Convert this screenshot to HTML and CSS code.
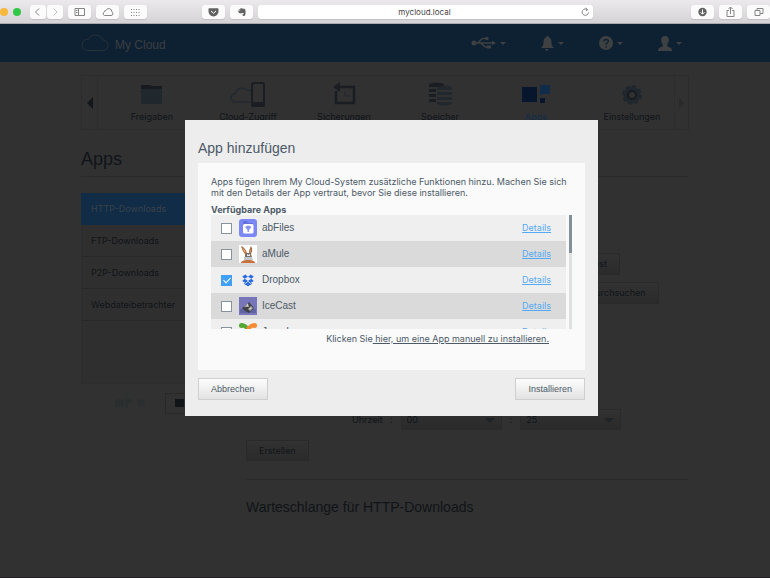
FILE: index.html
```html
<!DOCTYPE html>
<html lang="de">
<head>
<meta charset="utf-8">
<title>My Cloud</title>
<link rel="stylesheet" href="styles.css">
</head>
<body>
<div class="browser">
  <div class="lights"><span class="light amber"></span><span class="light green"></span></div>
  <div class="pair">
    <button class="tool" aria-label="Zurück"><svg width="16" height="14" viewBox="0 0 16 14"><path d="M9 3.500 5.500 7 9 10.500"/></svg></button>
    <button class="tool faint" aria-label="Vorwärts"><svg width="16" height="14" viewBox="0 0 16 14"><path d="M6.500 3.500 10 7 6.500 10.500"/></svg></button>
  </div>
  <button class="tool" aria-label="Seitenleiste"><svg width="23" height="14" viewBox="0 0 23 14"><path d="M7 3.500h9.500v7H7zM10.500 3.500v7M8 5.500h1.500M8 7.500h1.500"/></svg></button>
  <button class="tool" aria-label="iCloud"><svg width="23" height="14" viewBox="0 0 23 14"><path d="M8.500 10.500h6.500a2 2 0 0 0 .8-3.800 3 3 0 0 0-5.800-1.200 1.700 1.700 0 0 0-1.800 1.600 1.800 1.800 0 0 0 .3 3.400z"/></svg></button>
  <button class="tool" aria-label="Top Sites"><svg width="23" height="14" viewBox="0 0 23 14"><path stroke-dasharray="1 1.500" d="M7 4.500h9.500M7 7.500h9.500M7 10.500h9.500"/></svg></button>
  <button class="tool pocket" aria-label="Pocket"><svg width="23" height="14" viewBox="0 0 23 14"><path class="fill" d="M7.300 3.200h8.400q.8 0 .8.800v2.600a5 4.800 0 0 1-10 0V4q0-.8.800-.8z"/><path class="light-line" d="m9 6 2.500 2.300L14 6"/></svg></button>
  <button class="tool" aria-label="Evernote"><svg width="23" height="14" viewBox="0 0 23 14"><path class="fill" d="M8.300 5.600h1.900V3.400c1-.5 2.500-.2 3 .4 1.300 0 2 .3 2.200 1.200.3 2 .2 4.500-.4 5.600-.8.900-2.600.4-2.500-.8.100-.7.700-.8 1.300-.7V8.200c-.6.200-1.300 0-1.600-.5-.5.700-1.700.9-2.600.6-1-.3-1.400-1.300-1.300-2.700zM8.500 5l1.200-1.200V5z"/></svg></button>
  <div class="address"><span>mycloud.local</span><svg width="9" height="10" viewBox="0 0 9 10"><path d="M7.500 5.500a3.200 3.200 0 1 1-1-2.700L5 3.900M4.500 1l2.200 1.700"/></svg></div>
  <button class="tool" aria-label="Downloads"><svg width="23" height="14" viewBox="0 0 23 14"><circle class="fill" cx="11.500" cy="7" r="4.200"/><path class="light-line" d="M11.500 4.500V9M9.500 7.200l2 2 2-2"/></svg></button>
  <button class="tool" aria-label="Teilen"><svg width="23" height="14" viewBox="0 0 23 14"><path d="M10 5.500H8v6h7v-6h-2M11.500 9V2M9.500 4l2-2 2 2"/></svg></button>
  <button class="tool" aria-label="Tabs"><svg width="23" height="14" viewBox="0 0 23 14"><path d="M8 5.500h5v5H8zM10 5.500v-2h6v5h-3"/></svg></button>
</div>

<div class="page">
<header class="masthead">
  <div class="wrap masthead-row">
    <a class="logo" href="#"><svg width="28" height="18" viewBox="0 0 28 18"><path d="M6.500 16.500h15c3.500 0 5.500-2.500 5.500-5.200 0-3-2.200-5-5-5.300C20 2.500 17.500 1 14 1 11 1 8.500 2.700 7.800 5.200 4 5 1 7.500 1 11c0 3 2.300 5.500 5.500 5.500z"/></svg><span>My Cloud</span></a>
    <nav class="status">
      <button aria-label="USB"><svg width="25" height="14" viewBox="0 0 25 14"><circle cx="3" cy="7" r="2.500"/><path class="line" d="M3 7h20M6 7c3 0 3-4.500 6-4.500h3M9 7c3 0 3 4 6 4h2"/><path d="M21 4.800 25 7l-4 2.200zM16 9.500h4v3h-4z"/><circle cx="16" cy="2.500" r="1.700"/></svg><i class="caret"></i></button>
      <button aria-label="Meldungen"><svg width="13" height="15" viewBox="0 0 13 15"><path d="M6.500 0c.9 0 1.200.5 1.200 1.200C10 2 10.500 4 10.500 6.500c0 2.500.7 3.800 2.500 5.500H0c1.800-1.700 2.500-3 2.500-5.500C2.500 4 3 2 5.300 1.200 5.300.5 5.600 0 6.500 0zM4 13h3.500c-.5 2.400-3 2.400-3.500 0z"/></svg><i class="caret"></i></button>
      <button aria-label="Hilfe"><svg width="14" height="14" viewBox="0 0 14 14"><circle cx="7" cy="7" r="7"/><path class="mark" d="M4.700 5.300c.2-2.600 4.800-2.500 4.600 0C9.200 7 7 6.800 7 8.700M7 10v1.500"/></svg><i class="caret"></i></button>
      <button aria-label="Benutzer"><svg width="14" height="15" viewBox="0 0 14 15"><path d="M7 0c2.800 0 4 2 3.800 4.300C10.600 6.800 9.500 8 9 9c0 1.600 1 1.800 3 2.500 1.400.5 2 1.500 2 3.500H0c0-2 .6-3 2-3.500 2-.7 3-.9 3-2.500-.5-1-1.600-2.200-1.800-4.700C3 2 4.200 0 7 0z"/></svg><i class="caret"></i></button>
    </nav>
  </div>
</header>

<main class="wrap">
  <nav class="ribbon">
    <button class="step" aria-label="Vorherige"><svg width="6" height="12" viewBox="0 0 6 12"><path d="M6 0v12L0 6z"/></svg></button>
    <div class="tabs">
      <a href="#"><svg width="24" height="26" viewBox="0 0 24 26"><path fill="#171b1f" d="M1 4h9l2 1h10v4H1z"/><path fill="#20272d" d="M1 8h21v15H1z"/></svg><span>Freigaben</span></a>
      <a href="#"><svg width="36" height="26" viewBox="0 0 36 26"><path fill="none" stroke="#202931" stroke-width="1.500" d="M20 21H6c-6 0-7-8-.5-8.500C7 6 15 6 18 9.500h3"/><rect x="22" y="2" width="12" height="23" rx="2" fill="none" stroke="#1a1e22" stroke-width="2"/><path fill="#1a1e22" d="M21 21h14v3q0 2-2 2H23q-2 0-2-2z"/></svg><span>Cloud-Zugriff</span></a>
      <a href="#"><svg width="24" height="26" viewBox="0 0 24 26"><path fill="none" stroke="#1a1e22" stroke-width="2.500" d="M8 6h14v16H4V10"/><path fill="#1a1e22" d="M8 1v10L1 6z"/><path fill="none" stroke="#202931" d="M13 10v5h5"/></svg><span>Sicherungen</span></a>
      <a href="#"><svg width="26" height="26" viewBox="0 0 26 26"><path fill="#1a1e22" d="M2 3q7-3 15 0v3H2zM2 8h7v3H2zM2 13h7v3H2zM2 18h7v3H2z"/><path fill="#20272d" d="M10 6q8-3 15 0v3H10zM10 11h15v3H10zM10 16h15v3H10zM10 21h15v2q-8 3-15 0z"/></svg><span>Speicher</span></a>
      <a href="#" class="current"><svg width="28" height="26" viewBox="0 0 28 26"><path fill="#07162c" d="M0 6h15v15H0zM18 17h5v5h-5z"/><path fill="#102c4b" d="M18 4h10v9h-8l-2 2z"/></svg><span>Apps</span></a>
      <a href="#"><svg width="22" height="26" viewBox="0 0 22 26"><circle cx="11" cy="14" r="8.500" fill="none" stroke="#20272d" stroke-width="3" stroke-dasharray="4 2.670"/><circle cx="11" cy="14" r="6" fill="none" stroke="#20272d" stroke-width="5"/><circle cx="11" cy="14" r="4" fill="none" stroke="#171b1f" stroke-width="2"/></svg><span>Einstellungen</span></a>
    </div>
    <button class="step next" aria-label="Nächste"><svg width="5" height="10" viewBox="0 0 6 12"><path d="M0 0v12l6-6z"/></svg></button>
  </nav>

  <h1>Apps</h1>

  <div class="columns">
    <aside>
      <nav class="side">
        <a href="#" class="current">HTTP-Downloads</a>
        <a href="#">FTP-Downloads</a>
        <a href="#">P2P-Downloads</a>
        <a href="#">Webdateibetrachter</a>
      </nav>
      <div class="side-tools">
        <button class="muted" aria-label="App hinzufügen"><svg width="32" height="12" viewBox="0 0 32 12"><path d="M0 2h9v8H0zM10 1h7v5h-4v5h-3z"/><circle cx="26" cy="6" r="4"/></svg></button>
        <button aria-label="App entfernen"><svg width="32" height="12" viewBox="0 0 32 12"><path d="M0 2h9v8H0z"/><circle cx="26" cy="6" r="4"/></svg></button>
      </div>
    </aside>
    <form class="content">
      <div class="field"><input type="text" aria-label="URL"><button type="button" class="btn">Test</button></div>
      <div class="field second"><input type="text" aria-label="Speichern in"><button type="button" class="btn">Durchsuchen</button></div>
      <div class="time">
        <label for="hour">Uhrzeit</label><span>:</span>
        <span class="select"><select id="hour"><option>00</option></select></span><span>:</span>
        <span class="select"><select aria-label="Minute"><option>25</option></select></span>
      </div>
      <button type="button" class="btn create">Erstellen</button>
      <h2>Warteschlange für HTTP-Downloads</h2>
    </form>
  </div>
</main>
</div>

<div class="overlay">
  <section class="dialog" role="dialog" aria-labelledby="dialog-title">
    <h2 id="dialog-title">App hinzufügen</h2>
    <div class="panel">
      <p>Apps fügen Ihrem My Cloud-System zusätzliche Funktionen hinzu. Machen Sie sich<br>mit den Details der App vertraut, bevor Sie diese installieren.</p>
      <h3>Verfügbare Apps</h3>
      <div class="scroller">
        <ul>
          <li><input type="checkbox" id="abfiles"><svg width="18" height="18" viewBox="0 0 18 18"><rect width="18" height="18" rx="3" fill="#7c87f6"/><path fill="#6570df" d="M4 2h4l1 2h5v2H4z"/><rect x="4" y="5" width="10.500" height="9.500" rx="1.500" fill="#fff"/><path fill="#8993f5" d="M6 8q3-3 6.500 0L10 11v2H8.500v-2z"/></svg><label for="abfiles">abFiles</label><a href="#">Details</a></li>
          <li><input type="checkbox" id="amule"><svg width="18" height="18" viewBox="0 0 18 18"><path fill="#fff" d="M0 0h18v18H0z"/><path fill="#a9683e" d="M2 1c3 1 5 4 6 7h2c0-3 1-5 2-7 2 3 1 6 0 8l1 3H6V9C4 7 3 4 2 1z"/><path fill="#eab27e" d="M3.500 3c2 1 3 3 3.500 5L5 6.500zM12 3v4l-1 2z"/><path fill="#77726f" d="M7 8h5v4l-1 2H7l-1-2z"/><path fill="#eee" d="m8 9 1.500 1L11 9v2H8z"/><path fill="#c9703f" d="M2 17c4-3 10-3 14 0v1H2z"/><path fill="#c3c8cb" d="M5 12h8l1 3H5z"/></svg><label for="amule">aMule</label><a href="#">Details</a></li>
          <li><input type="checkbox" id="dropbox" checked><svg width="18" height="18" viewBox="0 0 18 18"><path fill="#2b6de3" d="M6.300 3.500 9 5.700 5.700 7.800 3.200 5.600zM11.700 3.500 9 5.700l3.300 2.100 2.500-2.200zM3.200 9.900l2.500-2.100L9 9.900 6.300 12zM14.800 9.900l-2.500-2.100L9 9.900l2.700 2.100zM9 10.800l2.700 2 1.300-.7v1L9 15.300l-4-2.200v-1l1.300.7z"/></svg><label for="dropbox">Dropbox</label><a href="#">Details</a></li>
          <li><input type="checkbox" id="icecast"><svg width="18" height="18" viewBox="0 0 18 18"><path fill="#7776bb" d="M0 0h18v18H0z"/><path fill="#6263a4" d="M1 12h16v4H1z"/><path fill="#41424e" d="M3 11l4-3 3-3 5 6-3 3-2 2-4-2z"/><path fill="#aaa9a0" d="m5 10 4-4 1 4zM9 12l3-3 2 2-3 3z"/><path fill="#eee" d="m8 8 1-1v2zM10 12l2-1v1z"/></svg><label for="icecast">IceCast</label><a href="#">Details</a></li>
          <li><input type="checkbox" id="joomla"><svg width="18" height="18" viewBox="0 0 18 18"><path fill="none" stroke="#52a833" stroke-width="4" d="M2.500 2.500c3-1 4 1 7 4"/><circle cx="2.500" cy="2.500" r="2.500" fill="#52a833"/><path fill="none" stroke="#f38b38" stroke-width="4" d="M15.500 2.500c-3-1-4 1-7 4"/><circle cx="15.500" cy="2.500" r="2.500" fill="#f38b38"/></svg><label for="joomla">Joomla</label><a href="#">Details</a></li>
        </ul>
        <div class="track"><div class="thumb"></div></div>
      </div>
      <p class="manual">Klicken Sie<a href="#">&nbsp;hier, um eine App manuell zu installieren.</a></p>
    </div>
    <div class="actions">
      <button class="btn bright">Abbrechen</button>
      <button class="btn bright">Installieren</button>
    </div>
  </section>
</div>
</body>
</html>
```
FILE: styles.css
```css
* { box-sizing: border-box; }
body {
  margin: 0;
  min-height: 100vh;
  display: flex;
  flex-direction: column;
  background: #313131;
  color: #101418;
  font: 9px/12px Inter, "Liberation Sans", sans-serif;
}
h1, h2, h3, p, ul { margin: 0; padding: 0; }
h1, h2 { font-family: "Liberation Sans", sans-serif; font-weight: 400; }
button, input, select { font: inherit; color: inherit; margin: 0; }
button { padding: 0; border: 0; background: none; }
a { color: inherit; text-decoration: none; }
svg { display: block; flex: none; }

/* Browser toolbar */
.browser {
  display: flex;
  align-items: center;
  height: 24px;
  gap: 5px;
  background: linear-gradient(#ebe9eb, #d5d3d5);
  border-bottom: 1px solid #aaa9ac;
  color: #555;
  overflow: hidden;
}
.lights { display: flex; gap: 5px; width: 25px; }
.light { width: 8px; height: 8px; border-radius: 50%; }
.amber { background: #f6b93b; }
.green { background: #33c748; }
.pair { display: flex; gap: 1px; }
.tool {
  flex: none;
  height: 14px;
  border-radius: 3px;
  background: #fbfbfb;
  box-shadow: 0 1px 1px #c0bfc1;
}
.tool path, .address path { fill: none; stroke: #858585; }
.tool .fill { fill: #626262; stroke: none; }
.tool .light-line { stroke: #fff; }
.faint path { stroke: #c2c2c2; }
.pocket { margin-left: 50px; }
.address {
  flex: 1;
  display: flex;
  align-items: center;
  height: 14px;
  margin-right: 93px;
  padding-right: 3px;
  border-radius: 3px;
  background: #fff;
  box-shadow: 0 1px 1px #c0bfc1;
  color: #444;
}
.address span { flex: 1; padding-left: 10px; text-align: center; font: 8px/14px Inter, "Liberation Sans", sans-serif; }

/* Page */
.page { flex: 1; border-bottom: 1px solid #231f22; }
.wrap { max-width: 608px; margin: 0 auto; }
.masthead { background: #0e2133; color: #3c3e41; }
.masthead-row { display: flex; justify-content: space-between; align-items: center; height: 38px; padding-right: 7px; }
.logo { display: flex; align-items: center; gap: 6px; font: 12px/16px "Liberation Sans", sans-serif; }
.logo span { padding-top: 4px; }
.logo path { fill: none; stroke: #28323b; }
.status { display: flex; gap: 35px; }
.status button { display: flex; align-items: center; gap: 4px; }
.status svg { fill: #3e4042; }
.status .line { fill: none; stroke: #3e4042; stroke-width: 1.500; }
.status .mark { fill: none; stroke: #0e2133; stroke-width: 1.500; }
.caret { border: 3px solid transparent; border-top-color: #3e4042; border-bottom: 0; }

.ribbon {
  display: grid;
  grid-template-columns: 16px 1fr 14px;
  height: 55px;
  margin-top: 13px;
  border: 1px solid #2c2c2d;
}
.step { display: flex; align-items: center; justify-content: center; border-right: 1px solid #2d2d2e; fill: #14171a; }
.step.next { border-right: 0; border-left: 1px solid #2d2d2e; fill: #27292b; }
.tabs { display: grid; grid-template-columns: repeat(6, 1fr); padding-left: 6px; margin-right: -6px; }
.tabs a { display: flex; flex-direction: column; align-items: center; gap: 4px; padding-top: 5px; }
.tabs .current { color: #102c4b; }

h1 { margin-top: 17px; padding-bottom: 5px; border-bottom: 1px solid #292929; font-size: 18px; line-height: 24px; }
.columns { display: grid; grid-template-columns: 148px 1fr; gap: 17px; margin-top: 16px; }
.side { min-height: 191px; border: 1px solid #2d2d2d; background: #2f2f2f; }
.side a { display: block; padding: 10px 0 9px 9px; border-bottom: 1px solid #282828; }
.side .current { margin: -1px -1px 0; padding: 10px 0 9px 10px; background: #102c47; border-color: #102c47; color: #3a4249; }
.side-tools { display: flex; gap: 8px; margin: 9px 0 0 24px; }
.side-tools button { padding: 3px 9px 4px; border: 1px solid #282828; fill: #121518; }
.side-tools .muted { border-color: #2f3030; fill: #2b2e2f; }

.btn {
  height: 22px;
  padding: 0 12px;
  border: 1px solid #292929;
  background: linear-gradient(#323232, #2b2b2b);
  white-space: nowrap;
}
.content { padding-top: 60px; }
.field { display: flex; gap: 8px; padding-left: 154px; }
.field input { width: 168px; height: 22px; border: 1px solid #292929; background: #303030; }
.second { margin-top: 7px; }
.time { display: flex; align-items: center; gap: 8px; margin-top: 105px; padding-left: 106px; }
.time label { width: 30px; }
.select { position: relative; }
.select::after {
  content: "";
  position: absolute;
  top: 9px;
  right: 7px;
  border: 5px solid transparent;
  border-top-color: #202326;
  border-bottom: 0;
}
.select select {
  appearance: none;
  display: block;
  width: 101px;
  height: 21px;
  padding: 0 5px;
  border: 1px solid #2a2a2a;
  border-radius: 0;
  background: linear-gradient(#323232, #2a2a2a);
}
.create { display: block; height: 21px; margin-top: 10px; }
.content h2 { margin-top: 18px; padding-top: 18px; border-top: 1px solid #292929; font-size: 14px; line-height: 18px; }

/* Dialog */
.overlay { position: absolute; inset: 0; display: flex; justify-content: center; align-items: flex-start; padding: 120px 0 0 13px; }
.dialog { width: 413px; padding: 19px 13px 16px; background: #ededed; color: #4c5967; }
.dialog h2 { font-size: 14px; line-height: 18px; }
.panel { min-height: 207px; margin-top: 6px; padding: 13px; background: #fafafa; }
.panel p { line-height: 11px; white-space: nowrap; }
.panel h3 { margin-top: 6px; font-size: 9px; line-height: 11px; }
.scroller { display: flex; gap: 3px; height: 114px; margin-bottom: 4px; overflow: hidden; }
.scroller ul { flex: 1; list-style: none; }
.scroller li { display: flex; align-items: center; height: 26px; padding: 0 15px 0 10px; background: #efefef; }
.scroller li:nth-child(even) { background: #dadada; }
.scroller label { flex: 1; padding-left: 5px; font: 10px/12px "Liberation Sans", sans-serif; }
.scroller a { color: #55aaf5; text-decoration: underline; }
.scroller input {
  appearance: none;
  width: 11px;
  height: 11px;
  margin-right: 7px;
  border: 1px solid #87929c;
  background: #fff;
}
.scroller input:checked { border-color: #3fa0f5; background: #3fa0f5; }
.scroller input:checked::after {
  content: "";
  display: block;
  width: 3px;
  height: 6px;
  margin: 0 0 0 3px;
  border: solid #fff;
  border-width: 0 1px 1px 0;
  transform: rotate(45deg);
}
.track { width: 3px; background: #dedfdf; }
.thumb { height: 38px; background: #82909a; }
.manual { padding-right: 23px; text-align: right; }
.manual a { text-decoration: underline; }
.actions { display: flex; justify-content: space-between; margin-top: 8px; }
.bright { border-color: #cfcfcf; background: linear-gradient(#fdfdfd, #e2e2e2); font: 9px/12px "Liberation Sans", sans-serif; }
```
